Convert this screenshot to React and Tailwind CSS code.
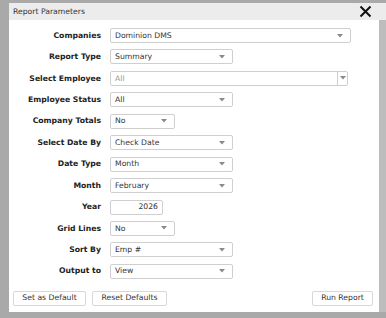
import React from 'react'

function Arrow() {
  return (
    <svg width="6" height="4" viewBox="0 0 6 4" className="shrink-0">
      <path d="M0 0 L6 0 L3 3.5 Z" fill="#8a8a8a" />
    </svg>
  )
}

function Select({ value, width, muted }) {
  return (
    <div
      className={`h-[15px] ${width} border border-[#cfcfcf] rounded-[2px] bg-white flex items-center justify-between pl-[4px] pr-[7px]`}
    >
      <span className={muted ? 'text-[#9a9a9a]' : 'text-[#333]'}>{value}</span>
      <Arrow />
    </div>
  )
}

function Row({ label, children }) {
  return (
    <div className="flex items-center h-[15px]">
      <div className="w-[92px] text-right font-bold text-[#222] whitespace-nowrap">{label}</div>
      <div className="ml-[9px]">{children}</div>
    </div>
  )
}

export default function App() {
  const rows = [
    { label: 'Companies', value: 'Dominion DMS', width: 'w-[241px]' },
    { label: 'Report Type', value: 'Summary', width: 'w-[123px]' },
    { label: 'Select Employee', employee: true },
    { label: 'Employee Status', value: 'All', width: 'w-[123px]' },
    { label: 'Company Totals', value: 'No', width: 'w-[65px]' },
    { label: 'Select Date By', value: 'Check Date', width: 'w-[123px]' },
    { label: 'Date Type', value: 'Month', width: 'w-[123px]' },
    { label: 'Month', value: 'February', width: 'w-[123px]' },
    { label: 'Year', year: true },
    { label: 'Grid Lines', value: 'No', width: 'w-[65px]' },
    { label: 'Sort By', value: 'Emp #', width: 'w-[123px]' },
    { label: 'Output to', value: 'View', width: 'w-[123px]' }
  ]

  return (
    <div
      className="w-[386px] h-[318px] bg-[#a9a9a9] pt-[3px] pl-[9px] text-[7.7px] leading-none overflow-hidden"
      style={{ fontFamily: '"DejaVu Sans", Verdana, sans-serif' }}
    >
      <div className="h-[17px] bg-[#ececec] flex items-center justify-between pl-[4px] pr-[14px] text-[#333]">
        <span>Report Parameters</span>
        <svg width="13" height="13" viewBox="0 0 13 13">
          <path d="M1.5 1.5 L11.5 11.5 M11.5 1.5 L1.5 11.5" stroke="#111" strokeWidth="2" />
        </svg>
      </div>
      <div className="flex">
        <div className="w-[370px] h-[292px] bg-white pt-[8px] flex flex-col">
          <div className="flex flex-col gap-[6.45px]">
            {rows.map((r) => (
              <Row key={r.label} label={r.label}>
                {r.employee ? (
                  <div className="flex h-[15px] w-[238px] border border-[#cfcfcf] rounded-[2px]">
                    <div className="flex-1 flex items-center pl-[4px] text-[#9a9a9a]">All</div>
                    <div className="w-[10px] border-l border-[#cfcfcf] flex items-center justify-center">
                      <Arrow />
                    </div>
                  </div>
                ) : r.year ? (
                  <div className="h-[15px] w-[53px] border border-[#cfcfcf] rounded-[2px] flex items-center justify-end pr-[4px] text-[#333]">
                    2026
                  </div>
                ) : (
                  <Select value={r.value} width={r.width} />
                )}
              </Row>
            ))}
          </div>
          <div className="flex items-center mt-[12px] px-[4px]">
            <button className="h-[15px] w-[73px] border border-[#d8d8d8] rounded-[2px] bg-white text-[#333]">
              Set as Default
            </button>
            <button className="h-[15px] w-[75px] ml-[6px] border border-[#d8d8d8] rounded-[2px] bg-white text-[#333]">
              Reset Defaults
            </button>
            <button className="h-[15px] w-[61px] ml-auto mr-[2px] border border-[#d8d8d8] rounded-[2px] bg-white text-[#333]">
              Run Report
            </button>
          </div>
        </div>
        <div className="w-[7px] h-[292px] bg-[#bdbdbd]" />
      </div>
    </div>
  )
}
